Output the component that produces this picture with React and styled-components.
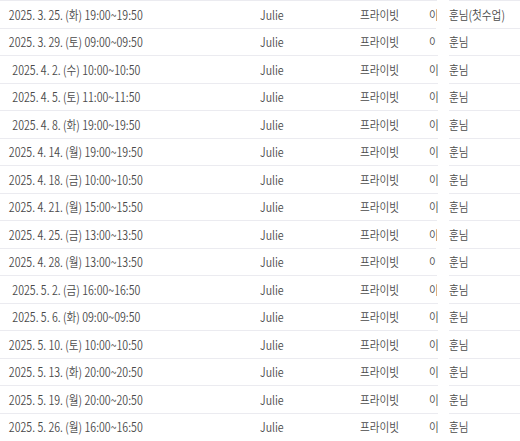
import React from "react";
import styled, { createGlobalStyle } from "styled-components";

const Global = createGlobalStyle`
  html, body { margin: 0; padding: 0; background: #fff; }
  body { font-family: "Noto Sans CJK KR", "Noto Sans", sans-serif; overflow: hidden; }
`;

const Table = styled.div`
  width: 520px;
  display: flex;
  flex-direction: column;
`;

const Row = styled.div`
  display: grid;
  grid-template-columns: 152px 208px 69px ${(p) => p.$clip}px ${(p) => 20 - p.$clip}px 1fr;
  height: 27.5px;
  font-size: 12.5px;
  font-weight: 350;
  color: #4a4a4a;
`;

const Cell = styled.div`
  box-sizing: border-box;
  display: flex;
  align-items: center;
  border-top: ${(p) => (p.$noLine ? "none" : "1px solid #ebebf0")};
  white-space: nowrap;
  overflow: hidden;
  justify-content: ${(p) => (p.$center ? "center" : "flex-start")};
  padding-left: ${(p) => p.$pad || 0}px;
`;

const Text = styled.span`
  display: inline-block;
  transform: scaleX(0.85);
  transform-origin: ${(p) => (p.$center ? "center" : "left")} center;
`;

const rows = [
  ["2025. 3. 25. (화) 19:00~19:50", "훈님(첫수업)", 8],
  ["2025. 3. 29. (토) 09:00~09:50", "훈님", 7],
  ["2025. 4. 2. (수) 10:00~10:50", "훈님", 9],
  ["2025. 4. 5. (토) 11:00~11:50", "훈님", 9],
  ["2025. 4. 8. (화) 19:00~19:50", "훈님", 9],
  ["2025. 4. 14. (월) 19:00~19:50", "훈님", 9],
  ["2025. 4. 18. (금) 10:00~10:50", "훈님", 9],
  ["2025. 4. 21. (월) 15:00~15:50", "훈님", 9],
  ["2025. 4. 25. (금) 13:00~13:50", "훈님", 8],
  ["2025. 4. 28. (월) 13:00~13:50", "훈님", 7],
  ["2025. 5. 2. (금) 16:00~16:50", "훈님", 8],
  ["2025. 5. 6. (화) 09:00~09:50", "훈님", 9],
  ["2025. 5. 10. (토) 10:00~10:50", "훈님", 9],
  ["2025. 5. 13. (화) 20:00~20:50", "훈님", 9],
  ["2025. 5. 19. (월) 20:00~20:50", "훈님", 9],
  ["2025. 5. 26. (월) 16:00~16:50", "훈님", 9],
];

export default function App() {
  return (
    <>
      <Global />
      <Table>
        {rows.map(([date, rest, clip], i) => (
          <Row key={i} $clip={clip}>
            <Cell $center>
              <Text $center>{date}</Text>
            </Cell>
            <Cell $pad={108}>
              <Text>Julie</Text>
            </Cell>
            <Cell>
              <Text>프라이빗</Text>
            </Cell>
            <Cell>
              <Text>이상</Text>
            </Cell>
            <Cell $noLine />
            <Cell>
              <Text>{rest}</Text>
            </Cell>
          </Row>
        ))}
      </Table>
    </>
  );
}
